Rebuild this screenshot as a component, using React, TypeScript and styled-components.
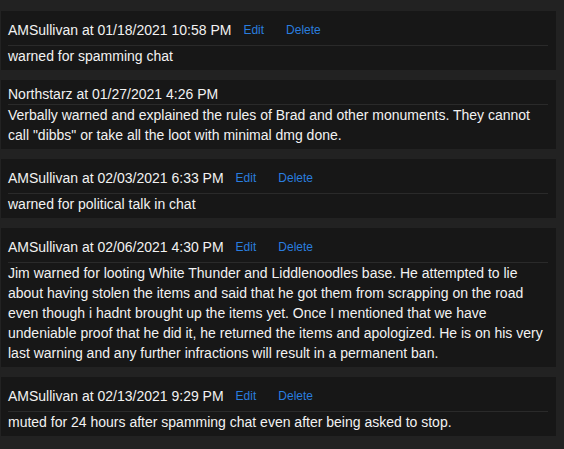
import styled, { createGlobalStyle } from "styled-components"

const GlobalStyle = createGlobalStyle`
  html, body {
    margin: 0;
    padding: 0;
    background: #222222;
  }
  body {
    font-family: "Liberation Sans", Arial, sans-serif;
  }
`

const List = styled('div')`
  display: flex;
  flex-direction: column;
  gap: 10px;
  padding: 11px 8px 13px 1px;
  min-height: 449px;
  box-sizing: border-box;
`

const Card = styled('div')`
  background: #171717;
  padding: 4px 8px 4px 7px;
  color: #f2f2f2;
  font-size: 14px;
  line-height: 20px;
`

const Header = styled('div')<{ $tall: boolean }>`
  display: flex;
  align-items: center;
  height: ${p => (p.$tall ? '30px' : '20px')};
  border-bottom: 1px solid #2a2a2a;
`

const Author = styled('span')`
  white-space: nowrap;
  margin-right: 1px;
`

const LinkButton = styled('button')`
  background: none;
  border: none;
  padding: 0 11px;
  font: inherit;
  font-size: 12px;
  color: #2a7ddf;
  cursor: pointer;
`

const Body = styled('div')`
  margin: 0;
`

type Note = {
  author: string
  date: string
  text: string
  editable: boolean
}

const notes: Note[] = [
  {
    author: 'AMSullivan',
    date: '01/18/2021 10:58 PM',
    text: 'warned for spamming chat',
    editable: true,
  },
  {
    author: 'Northstarz',
    date: '01/27/2021 4:26 PM',
    text: 'Verbally warned and explained the rules of Brad and other monuments. They cannot call "dibbs" or take all the loot with minimal dmg done.',
    editable: false,
  },
  {
    author: 'AMSullivan',
    date: '02/03/2021 6:33 PM',
    text: 'warned for political talk in chat',
    editable: true,
  },
  {
    author: 'AMSullivan',
    date: '02/06/2021 4:30 PM',
    text: 'Jim warned for looting White Thunder and Liddlenoodles base. He attempted to lie about having stolen the items and said that he got them from scrapping on the road even though i hadnt brought up the items yet. Once I mentioned that we have undeniable proof that he did it, he returned the items and apologized. He is on his very last warning and any further infractions will result in a permanent ban.',
    editable: true,
  },
  {
    author: 'AMSullivan',
    date: '02/13/2021 9:29 PM',
    text: 'muted for 24 hours after spamming chat even after being asked to stop.',
    editable: true,
  },
]

const App = (): JSX.Element => {
  return (
    <>
      <GlobalStyle />
      <List>
        {notes.map((n, i) => (
          <Card key={i}>
            <Header $tall={n.editable}>
              <Author>{n.author} at {n.date}</Author>
              {n.editable && (
                <>
                  <LinkButton>Edit</LinkButton>
                  <LinkButton>Delete</LinkButton>
                </>
              )}
            </Header>
            <Body>{n.text}</Body>
          </Card>
        ))}
      </List>
    </>
  )
}

export default App
